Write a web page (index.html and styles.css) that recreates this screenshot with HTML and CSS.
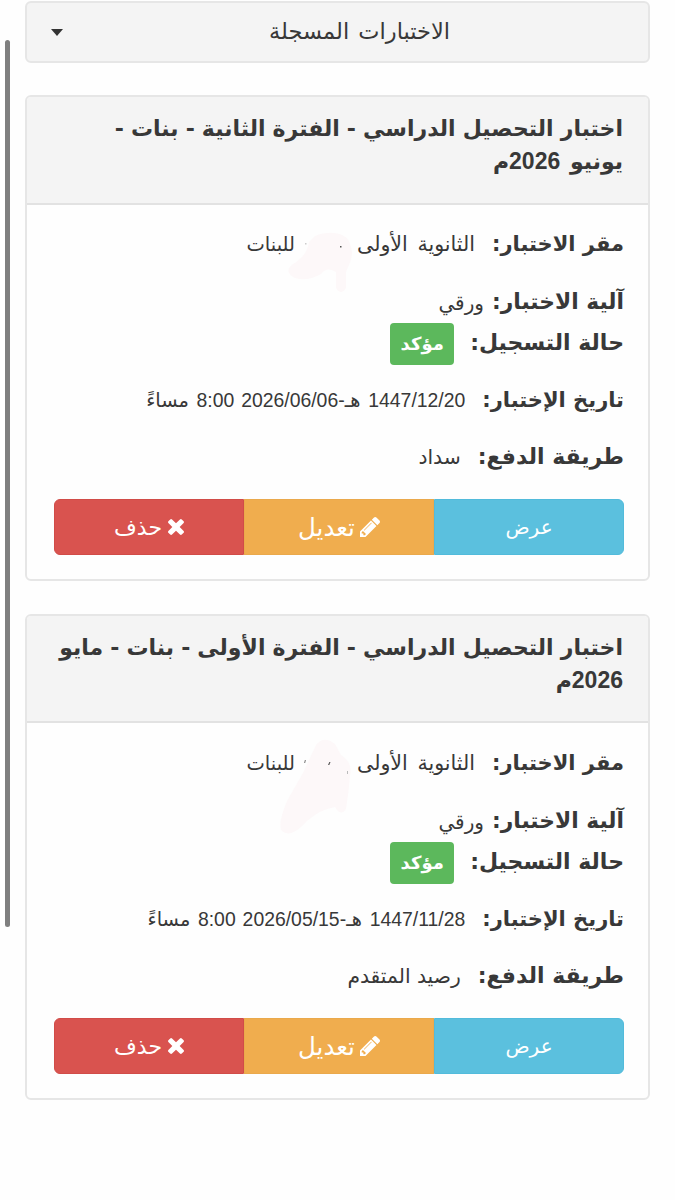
FILE: index.html
```html
<!DOCTYPE html>
<html lang="ar" dir="rtl">
<head>
<meta charset="utf-8">
<title>الاختبارات المسجلة</title>
<link rel="stylesheet" href="styles.css">
</head>
<body>
<svg width="0" height="0" class="defs">
  <symbol id="pencil" viewBox="0 149 1515 1515"><path fill="#fff" d="M363 1536l91-91-235-235-91 91v107h128v128h107zM886 608q0-22-22-22-10 0-17 7l-542 542q-7 7-7 17 0 22 22 22 10 0 17-7l542-542q7-7 7-17zM832 416l416 416-832 832H0v-416zM1515 512q0 53-37 90l-166 166-416-416 165-165q36-38 91-38 53 0 91 38l235 234q37 39 37 91z"/></symbol>
  <symbol id="times" viewBox="110 366 1188 1188"><path fill="#fff" d="M1298 1322q0 40-28 68l-136 136q-28 28-68 28t-68-28L704 1232 410 1526q-28 28-68 28t-68-28l-136-136q-28-28-28-68t28-68l294-294-294-294q-28-28-28-68t28-68l136-136q28-28 68-28t68 28l294 294 294-294q28-28 68-28t68 28l136 136q28 28 28 68t-28 68l-294 294 294 294q28 28 28 68z"/></symbol>
</svg>
<div class="scrollbar"></div>
<main class="page">
  <div class="dropdown"><span class="dropdown-label">الاختبارات المسجلة</span><span class="caret"></span></div>

  <section class="card">
    <h2 class="card-head"><span class="title">اختبار التحصيل الدراسي - الفترة الثانية - بنات -</span><br><span class="month">يونيو <span class="num">2026</span>م</span></h2>
    <div class="card-body">
      <div class="row r-place"><b>مقر الاختبار:</b><span class="val">الثانوية الأولى</span><span class="redacted">
        <svg class="smudge" viewBox="0 0 80 100"><path fill="#fdf8f9" d="M28 14C42 8 60 10 63 22C68 34 62 42 59 50V66Q54 74 49 66V50Q40 44 34 52Q20 60 8 56Q-4 50 6 42Q20 34 22 20Z"/><path fill="#555" d="M53 24h1.500v1.500h-1.500z"/><path fill="#ccc" d="M18 21h1.500v1.500h-1.500z"/></svg></span><span class="val girls">للبنات</span></div>
      <div class="row r-mode"><b>آلية الاختبار:</b><span class="val">ورقي</span></div>
      <div class="row r-state"><b>حالة التسجيل:</b><span class="badge">مؤكد</span></div>
      <div class="row r-date"><b>تاريخ الإختبار:</b><span class="val"><span class="num">1447/12/20</span> هـ<span class="num">-<bdi>2026/06/06</bdi> 8:00</span> مساءً</span></div>
      <div class="row r-pay"><b>طريقة الدفع:</b><span class="val">سداد</span></div>
      <div class="actions">
        <a class="btn view"><span>عرض</span></a>
        <a class="btn edit"><svg class="pencil"><use href="#pencil"/></svg><span>تعديل</span></a>
        <a class="btn delete"><svg class="cross"><use href="#times"/></svg><span>حذف</span></a>
      </div>
    </div>
  </section>

  <section class="card">
    <h2 class="card-head"><span class="title">اختبار التحصيل الدراسي - الفترة الأولى - بنات - مايو</span><br><span><span class="num">2026</span>م</span></h2>
    <div class="card-body">
      <div class="row r-place"><b>مقر الاختبار:</b><span class="val">الثانوية الأولى</span><span class="redacted">
        <svg class="smudge" viewBox="0 0 80 100"><path fill="#fdf8f9" d="M29 4Q37-6 48 3L54 14Q66 22 63 34Q62 50 59 68Q54 76 48 66Q34 68 20 80Q4 98-5 90Q-10 84 0 60L16 32Z"/><path fill="#555" d="M41 24l1.300-3h1.200l-1.200 3z"/><path fill="#888" d="M17 22l.8-3h1.200l-.8 3z"/><path fill="#bbb" d="M60 30h1v3h-1z"/></svg></span><span class="val girls">للبنات</span></div>
      <div class="row r-mode"><b>آلية الاختبار:</b><span class="val">ورقي</span></div>
      <div class="row r-state"><b>حالة التسجيل:</b><span class="badge">مؤكد</span></div>
      <div class="row r-date"><b>تاريخ الإختبار:</b><span class="val"><span class="num">1447/11/28</span> هـ<span class="num">-<bdi>2026/05/15</bdi> 8:00</span> مساءً</span></div>
      <div class="row r-pay"><b>طريقة الدفع:</b><span class="val">رصيد المتقدم</span></div>
      <div class="actions">
        <a class="btn view"><span>عرض</span></a>
        <a class="btn edit"><svg class="pencil"><use href="#pencil"/></svg><span>تعديل</span></a>
        <a class="btn delete"><svg class="cross"><use href="#times"/></svg><span>حذف</span></a>
      </div>
    </div>
  </section>
</main>
</body>
</html>
```
FILE: styles.css
```css
* { box-sizing: border-box; }
body {
  margin: 0;
  background: #fefefe;
  color: #383838;
  font-family: "DejaVu Sans", sans-serif;
}
.defs { position: absolute; }
.num { font-family: "Liberation Sans", sans-serif; }
.scrollbar {
  position: absolute;
  left: 5px;
  top: 40px;
  width: 5px;
  height: 887px;
  border-radius: 3px;
  background: #7f7f7f;
}
.page { padding: 1px 25px 0; }
.dropdown {
  display: flex;
  align-items: center;
  justify-content: center;
  position: relative;
  height: 62px;
  padding: 0 0 3px 44px;
  border: 2px solid #e6e6e6;
  border-radius: 6px;
  background: #f4f4f4;
  font-size: 22.500px;
  word-spacing: 2px;
}
.caret {
  position: absolute;
  left: 24px;
  top: 26px;
  border: 6px solid transparent;
  border-top: 7px solid #333;
  border-bottom: 0;
}
.card {
  position: relative;
  z-index: 0;
  height: 486px;
  margin-top: 32px;
  border: 2px solid #e6e6e6;
  border-radius: 6px;
  background: #fefefe;
}
.card-head {
  height: 108px;
  margin: 0;
  padding: 15px 25px 0;
  border-bottom: 2px solid #e2e2e2;
  background: #f4f4f4;
  border-radius: 4px 4px 0 0;
  font-size: 22px;
  line-height: 33px;
  white-space: nowrap;
}
.title { word-spacing: -0.600px; }
.month { word-spacing: 2px; }
.card-head .num { font-size: 23px; }
.card-body {
  display: flex;
  flex-direction: column;
  padding: 17px 24px 0 27px;
}
.card + .card { margin-top: 33px; }
.card + .card .card-head { height: 107px; }
.card + .card .card-body { padding-top: 18px; }
.row {
  display: flex;
  align-items: center;
  height: 44px;
  white-space: nowrap;
  font-size: 20.300px;
}
.row b { font-size: 21px; }
.val { margin-right: 17px; }
.r-place .val { word-spacing: 3px; font-size: 20.600px; }
.r-place .girls { font-size: 19.500px; }
.r-mode { margin-top: 14px; height: 42px; }
.r-mode b { font-size: 21.800px; }
.r-mode .val { margin-right: 8px; padding-top: 3px; font-size: 20px; }
.r-state { height: 43px; }
.r-state b { padding-bottom: 2px; }
.r-state b, .r-pay b { font-size: 22px; }
.r-date { margin-top: 13px; font-size: 19.400px; word-spacing: 1.500px; }
.r-date b { word-spacing: 0; }
.r-date .num { font-size: 19.400px; }
.r-pay { margin-top: 13px; }
.r-pay b { padding-bottom: 1px; }
.redacted { position: relative; width: 45px; height: 30px; }
.smudge {
  position: absolute;
  right: -10px;
  top: -7px;
  z-index: -1;
  width: 80px;
  height: 100px;
  overflow: visible;
}
.badge {
  display: flex;
  align-items: center;
  justify-content: center;
  width: 64px;
  height: 42px;
  margin-right: 16px;
  border-radius: 4px;
  background: #5cb85c;
  color: #fff;
  font-size: 18px;
  font-weight: bold;
}
.actions {
  display: flex;
  height: 56px;
  margin-top: 20px;
}
.btn {
  display: flex;
  flex: 1;
  align-items: center;
  justify-content: center;
  gap: 5px;
  border: 1px solid;
  color: #fff;
  font-size: 22px;
}
.view { background: #5bc0de; border-color: #52bbdb; border-radius: 0 6px 6px 0; font-size: 20px; }
.edit { background: #f0ad4e; border-color: #eaa94c; font-size: 24.500px; }
.delete { background: #d9534f; border-color: #d14c48; border-radius: 6px 0 0 6px; gap: 6px; }
.pencil { width: 20px; height: 20px; }
.cross { width: 16px; height: 16px; }
```
